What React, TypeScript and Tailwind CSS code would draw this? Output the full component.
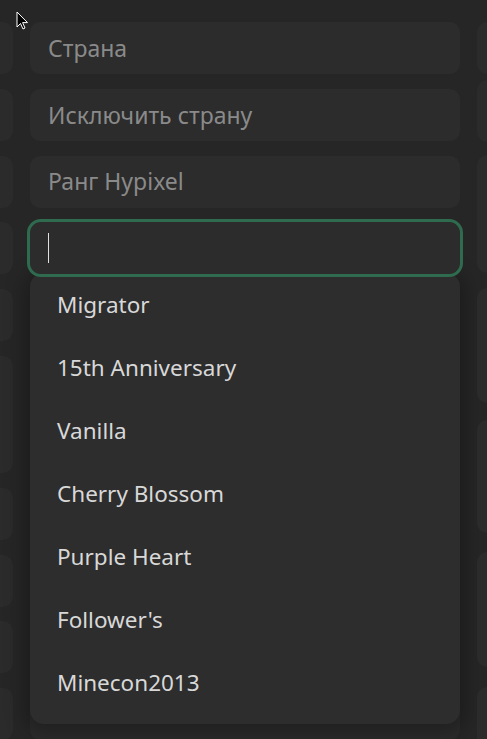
import React from "react";

const items = [
  "Migrator",
  "15th Anniversary",
  "Vanilla",
  "Cherry Blossom",
  "Purple Heart",
  "Follower's",
  "Minecon2013",
];

const leftCells = [52, 52, 52, 52, 52, 117, 52, 52, 52, 52];
const rightCells: { top: number; h: number }[] = [
  { top: 22, h: 52 },
  { top: 80, h: 62 },
  { top: 155, h: 118 },
  { top: 288, h: 115 },
  { top: 420, h: 113 },
  { top: 552, h: 115 },
  { top: 687, h: 80 },
];

export default function App() {
  return (
    <div
      className="relative h-[739px] w-[487px] overflow-hidden bg-[#262626]"
      style={{ fontFamily: '"Noto Sans", "Open Sans", sans-serif' }}
    >
      <div className="flex gap-[17px] pt-[22px] ml-[-87px]">
        {/* left column */}
        <div className="flex w-[100px] shrink-0 flex-col gap-[14.8px]">
          {leftCells.map((h, i) => (
            <div
              key={i}
              className="rounded-[10px] bg-[#2b2b2b]"
              style={{ height: h }}
            />
          ))}
        </div>

        {/* middle column */}
        <div className="relative flex w-[430px] shrink-0 flex-col gap-[14.8px]">
          {["Страна", "Исключить страну", "Ранг Hypixel"].map((t) => (
            <div
              key={t}
              className="flex h-[52px] items-center rounded-[10px] bg-[#2c2c2c] pl-[18px] text-[23px] text-[#8a8a8a]"
            >
              {t}
            </div>
          ))}
          <div className="relative z-10 flex h-[52px] items-center rounded-[11px] bg-[#2c2c2c] pl-[18px] outline-[3px] outline-solid outline-[#2e6b4f]">
            <div className="h-[30px] w-px bg-[#e0e0e0]" />
          </div>
          <div className="h-[52px] rounded-[10px] bg-[#2c2c2c]" />
          <div className="h-[117px] rounded-[10px] bg-[#2c2c2c]" />
          <div className="h-[52px] rounded-[10px] bg-[#2c2c2c]" />
          <div className="h-[52px] rounded-[10px] bg-[#2c2c2c]" />
          <div className="h-[52px] rounded-[10px] bg-[#2c2c2c]" />
          <div className="h-[52px] rounded-[10px] bg-[#2c2c2c]" />

          {/* dropdown */}
          <div className="absolute left-0 top-[251px] w-[430px] rounded-[14px] bg-[#2d2d2d] pb-[10px] shadow-[0_4px_20px_6px_rgba(0,0,0,0.28)]">
            {items.map((it) => (
              <div
                key={it}
                className="flex h-[63px] items-center pl-[27px] text-[22.5px] text-[#d8d8d8]"
              >
                {it}
              </div>
            ))}
          </div>
        </div>

        {/* right column */}
        <div className="relative w-[100px] shrink-0">
          {rightCells.map((c, i) => (
            <div
              key={i}
              className="absolute left-0 w-[100px] rounded-[10px] bg-[#2b2b2b]"
              style={{ top: c.top - 22, height: c.h }}
            />
          ))}
        </div>
      </div>

      {/* mouse cursor */}
      <svg
        className="absolute left-[16px] top-[11px]"
        width="14"
        height="20"
        viewBox="0 0 14 20"
      >
        <path
          d="M1 1 L1 16 L4.5 12.5 L7 18 L9 17 L6.6 11.6 L11.5 11.6 Z"
          fill="#000"
          stroke="#fff"
          strokeWidth="1"
          strokeLinejoin="miter"
        />
      </svg>
    </div>
  );
}
